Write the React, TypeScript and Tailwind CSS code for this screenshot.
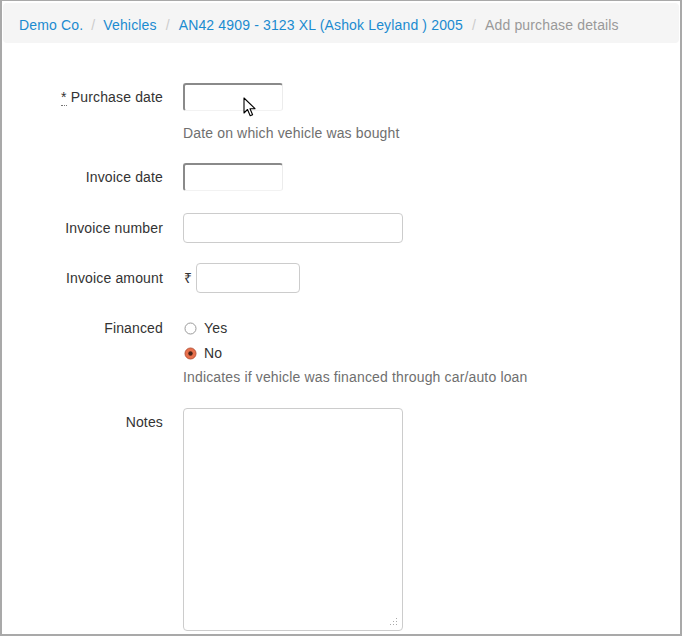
import React from "react";

const font = { fontFamily: '"Liberation Sans", Arial, sans-serif', letterSpacing: "0.15px" };

function Radio({ checked }: { checked?: boolean }) {
  return (
    <svg width="13" height="13" viewBox="0 0 13 13" className="shrink-0">
      {checked ? (
        <>
          <circle cx="6.5" cy="6.5" r="5.5" fill="#e8704c" stroke="#b9553a" strokeWidth="1" />
          <circle cx="6.5" cy="6.5" r="2.2" fill="#4a2418" />
        </>
      ) : (
        <circle cx="6.5" cy="6.5" r="5.5" fill="#fff" stroke="#9a9a9a" strokeWidth="1" />
      )}
    </svg>
  );
}

function DateInput({ cursor }: { cursor?: boolean }) {
  return (
    <div className="relative w-[100px] h-[28px] rounded-[3px] border-t-2 border-l-2 border-r border-b border-t-[#8a8a8a] border-l-[#8a8a8a] border-r-[#ececec] border-b-[#f2f2f2] bg-white">
      {cursor && (
        <svg
          className="absolute left-[58px] top-[12px]"
          width="14"
          height="21"
          viewBox="0 0 14 21"
        >
          <path
            d="M1 1 L1 16 L4.5 12.5 L7.2 18.8 L9.6 17.8 L7 11.7 L12 11.7 Z"
            fill="#fff"
            stroke="#000"
            strokeWidth="1.1"
            strokeLinejoin="round"
          />
        </svg>
      )}
    </div>
  );
}

export default function App() {
  const labelCls = "w-[161px] shrink-0 text-right text-[14px] leading-[20px] text-[#333]";
  return (
    <div style={font} className="w-[683px] h-[637px] bg-white">
      <div className="w-[682px] h-[636px] border-t border-l-2 border-r-2 border-b-2 border-[#a9a9a9] bg-white">
        <div className="mx-[1px] mt-[2px] h-[40px] rounded-[4px] bg-[#f5f5f5] flex items-center px-[16px] pt-[3px] text-[14px] leading-[20px]">
          <span className="text-[#1b8bd0]">Demo Co.</span>
          <span className="text-[#cccccc] px-[8px]">/</span>
          <span className="text-[#1b8bd0]">Vehicles</span>
          <span className="text-[#cccccc] px-[9px]">/</span>
          <span className="text-[#1b8bd0]">AN42 4909 - 3123 XL (Ashok Leyland ) 2005</span>
          <span className="text-[#cccccc] px-[9px]">/</span>
          <span className="text-[#999999]">Add purchase details</span>
        </div>

        <div className="mt-[40px] flex flex-col">
          {/* Purchase date */}
          <div className="flex">
            <div className={labelCls + " pt-[4px]"}>
              <abbr className="no-underline border-b border-dotted border-[#777]">*</abbr> Purchase date
            </div>
            <div className="ml-[20px] flex flex-col">
              <DateInput cursor />
              <div className="mt-[12px] text-[14px] leading-[20px] text-[#6f6f6f]">
                Date on which vehicle was bought
              </div>
            </div>
          </div>

          {/* Invoice date */}
          <div className="flex mt-[20px]">
            <div className={labelCls + " pt-[4px]"}>Invoice date</div>
            <div className="ml-[20px]">
              <DateInput />
            </div>
          </div>

          {/* Invoice number */}
          <div className="flex mt-[22px]">
            <div className={labelCls + " pt-[5px]"}>Invoice number</div>
            <div className="ml-[20px]">
              <div className="w-[220px] h-[30px] rounded-[4px] border border-[#cccccc] bg-white" />
            </div>
          </div>

          {/* Invoice amount */}
          <div className="flex mt-[20px]">
            <div className={labelCls + " pt-[5px]"}>Invoice amount</div>
            <div className="ml-[21px] flex items-center">
              <span className="text-[14px] leading-[20px] text-[#333] w-[12px]">₹</span>
              <div className="w-[104px] h-[30px] rounded-[4px] border border-[#cccccc] bg-white" />
            </div>
          </div>

          {/* Financed */}
          <div className="flex mt-[25px]">
            <div className={labelCls}>Financed</div>
            <div className="ml-[20px] flex flex-col text-[14px] leading-[20px] text-[#333]">
              <div className="flex items-center gap-[7px] h-[20px] pl-[1px]">
                <Radio />
                <span>Yes</span>
              </div>
              <div className="flex items-center gap-[7px] h-[20px] mt-[5px] pl-[1px]">
                <Radio checked />
                <span>No</span>
              </div>
              <div className="mt-[4px] text-[#6f6f6f]">
                Indicates if vehicle was financed through car/auto loan
              </div>
            </div>
          </div>

          {/* Notes */}
          <div className="flex mt-[21px]">
            <div className={labelCls + " pt-[4px]"}>Notes</div>
            <div className="ml-[20px]">
              <div className="relative w-[220px] h-[223px] rounded-[4px] border border-[#cccccc] bg-white">
                <svg className="absolute right-[4px] bottom-[4px]" width="8" height="8" viewBox="0 0 8 8">
                  <rect x="6" y="0" width="1" height="1" fill="#aaa" />
                  <rect x="3" y="3" width="1" height="1" fill="#aaa" />
                  <rect x="6" y="3" width="1" height="1" fill="#aaa" />
                  <rect x="0" y="6" width="1" height="1" fill="#aaa" />
                  <rect x="3" y="6" width="1" height="1" fill="#aaa" />
                  <rect x="6" y="6" width="1" height="1" fill="#aaa" />
                </svg>
              </div>
            </div>
          </div>
        </div>
      </div>
    </div>
  );
}
